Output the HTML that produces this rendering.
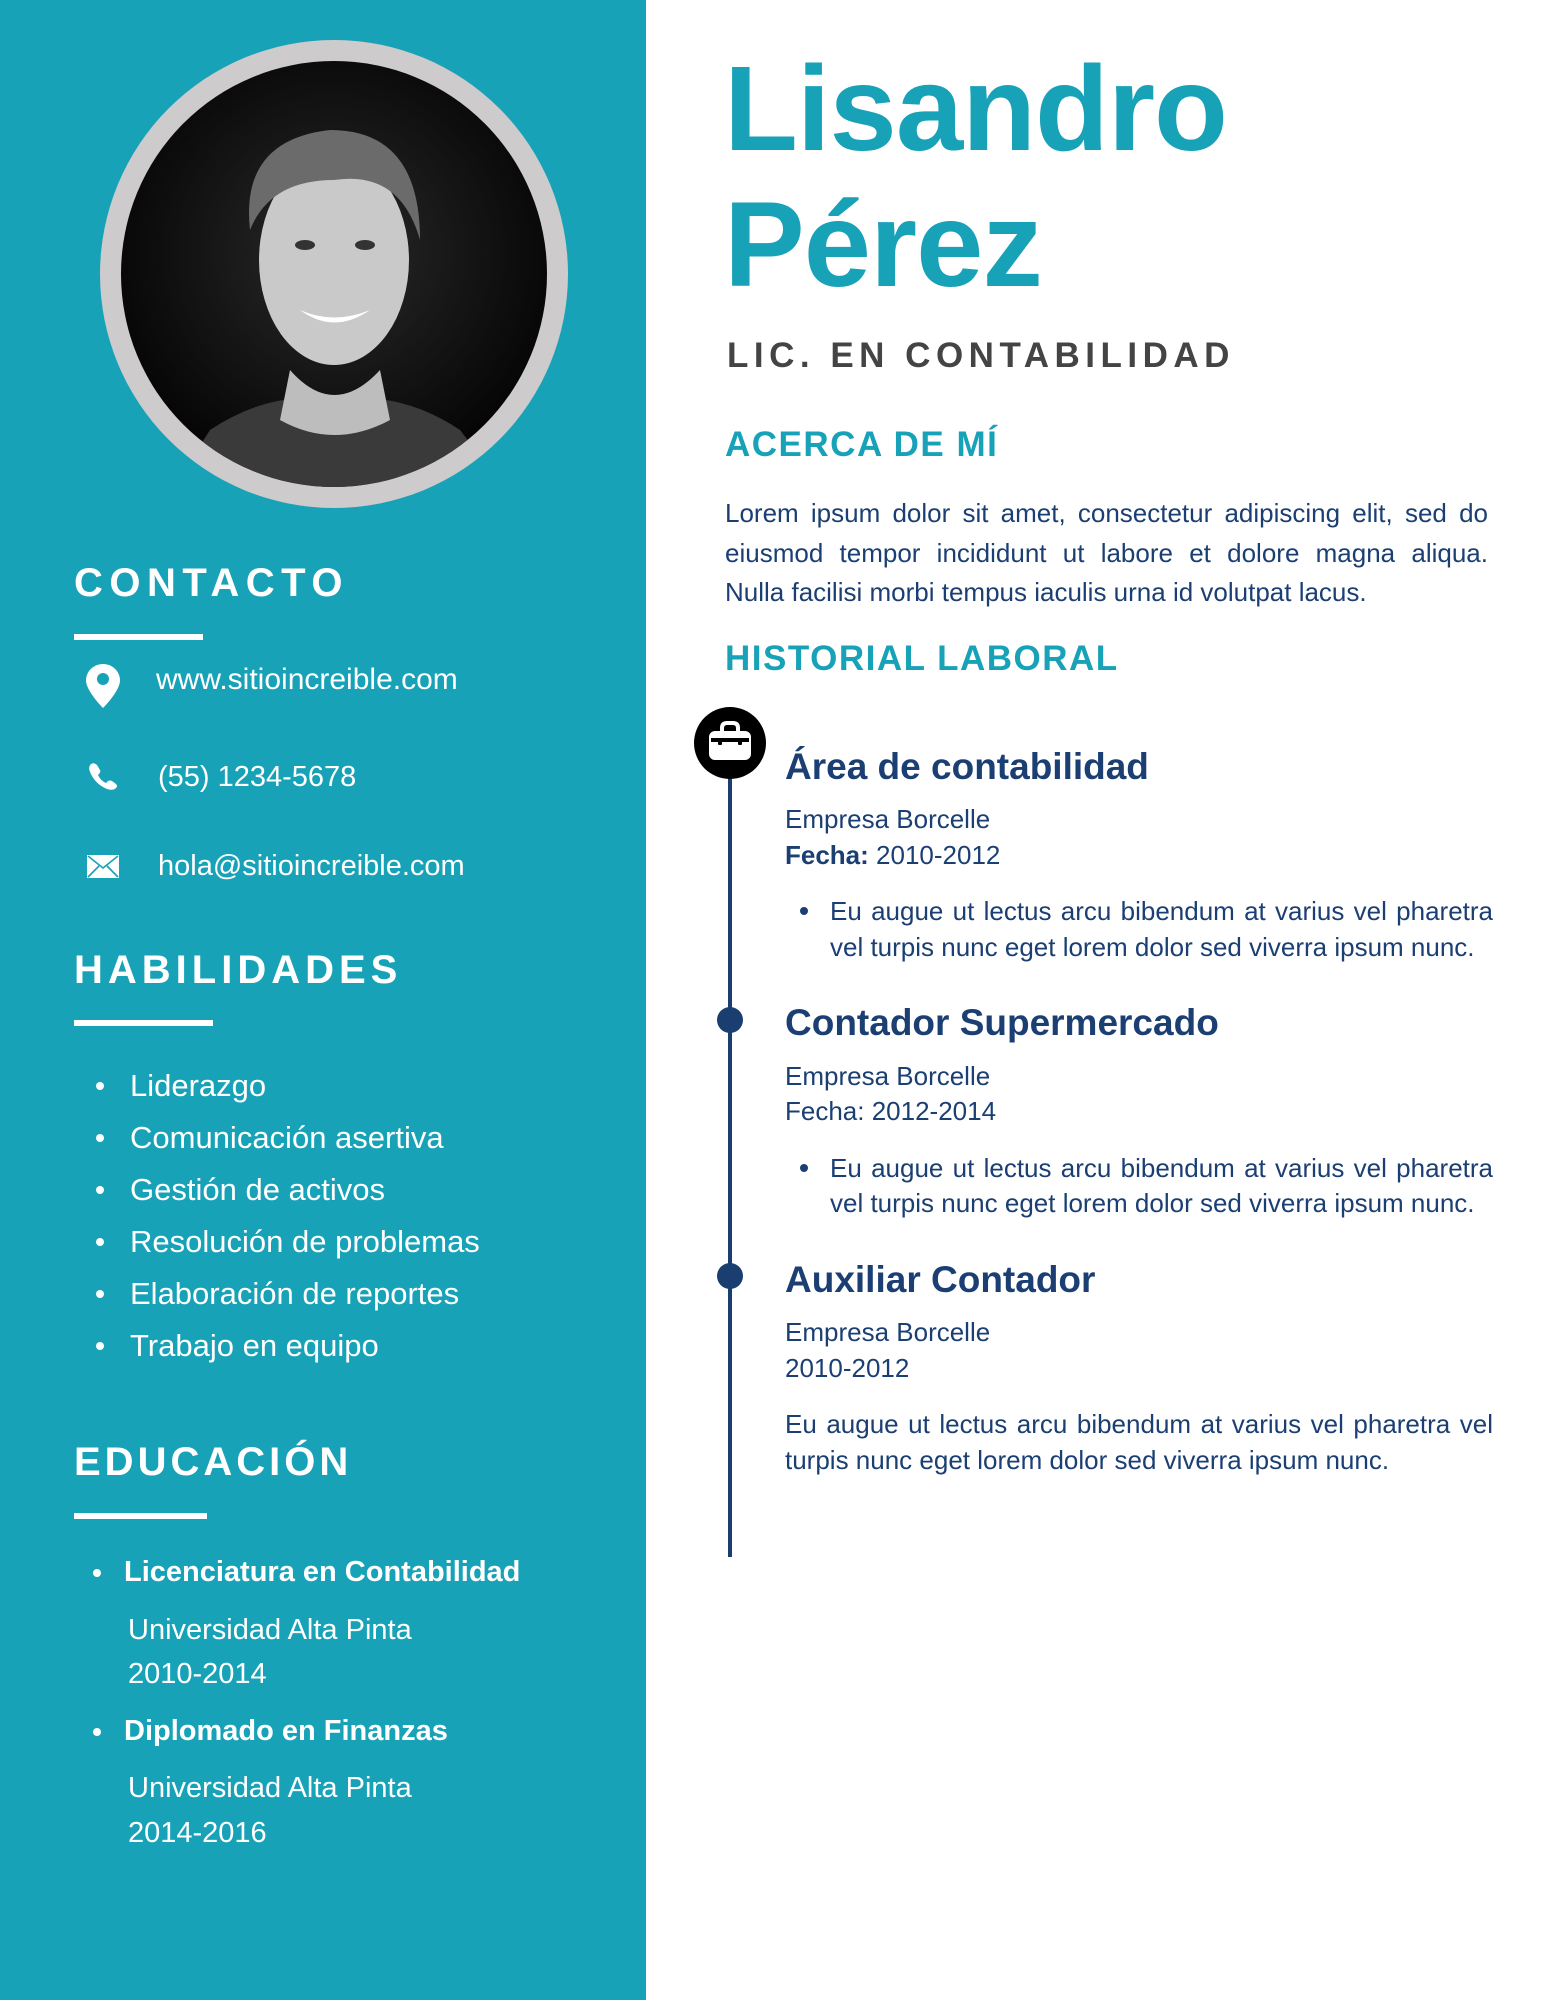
<!DOCTYPE html>
<html><head><meta charset="utf-8">
<style>
*{margin:0;padding:0;box-sizing:border-box}
html,body{width:1545px;height:2000px;overflow:hidden;background:#fff;font-family:"Liberation Sans",sans-serif}
.side{position:absolute;left:0;top:0;width:646px;height:2000px;background:#18a2b8;color:#fff}
.abs{position:absolute;white-space:nowrap}
.h{font-weight:bold;font-size:40px;letter-spacing:5px;line-height:1}
.bar{position:absolute;left:74px;height:6px;background:#fff}
.ct{font-size:29px;line-height:1}
.sk{font-size:31px;line-height:1}
.ed{font-size:29px;line-height:1}
.dot{position:absolute;width:8px;height:8px;border-radius:50%;background:#fff}
.name{font-weight:bold;font-size:121px;color:#18a2b8;letter-spacing:-1px;line-height:1}
.sec{font-weight:bold;font-size:35px;color:#18a2b8;letter-spacing:1.5px;line-height:1}
.t{font-weight:bold;font-size:37px;line-height:1;color:#1b3f73}
.b{font-size:26px;line-height:1;color:#1b3f73}
.j{position:absolute;text-align:justify;text-align-last:justify;white-space:nowrap;color:#1b3f73;font-size:26px;line-height:1}
</style></head><body>
<div class="side">
  <svg class="abs" style="left:100px;top:40px" width="468" height="468" viewBox="0 0 468 468">
    <defs>
      <radialGradient id="g" cx="50%" cy="45%" r="55%">
        <stop offset="0" stop-color="#2a2a2a"/><stop offset="1" stop-color="#050505"/>
      </radialGradient>
      <clipPath id="c"><circle cx="234" cy="234" r="213"/></clipPath>
    </defs>
    <circle cx="234" cy="234" r="234" fill="#cdcbcc"/>
    <circle cx="234" cy="234" r="213" fill="url(#g)"/>
    <g clip-path="url(#c)">
      <path d="M60 468 L110 390 Q170 350 234 360 Q300 350 360 390 L420 468Z" fill="#3a3a3a"/>
      <path d="M190 330 Q234 380 280 330 L290 380 Q234 410 180 380Z" fill="#bdbdbd"/>
      <ellipse cx="234" cy="220" rx="75" ry="105" fill="#c9c9c9"/>
      <path d="M150 190 Q140 100 230 90 Q320 90 320 200 Q300 130 234 140 Q170 140 150 190Z" fill="#6b6b6b"/>
      <path d="M200 270 Q234 295 270 270 Q234 285 200 270Z" fill="#fff"/>
      <ellipse cx="205" cy="205" rx="10" ry="5" fill="#333"/>
      <ellipse cx="265" cy="205" rx="10" ry="5" fill="#333"/>
    </g>
  </svg>

  <div class="abs h" style="left:74px;top:563px;letter-spacing:6.5px">CONTACTO</div>
  <div class="bar" style="top:634px;width:129px"></div>
  <svg class="abs" style="left:86px;top:664px" width="34" height="44" viewBox="0 0 34 44"><path d="M17 0C7.6 0 0 7.4 0 16.5 0 27 17 44 17 44S34 27 34 16.5C34 7.4 26.4 0 17 0Z" fill="#fff"/><circle cx="17" cy="15" r="6" fill="#18a2b8"/></svg>
  <div class="abs ct" style="left:156px;top:665px;font-size:30px">www.sitioincreible.com</div>
  <svg class="abs" style="left:88px;top:762px" width="30" height="28" viewBox="0 0 30 28"><path d="M3 2 Q6 0 9 3 L12 8 Q13 10 11 12 L10 13 Q13 19 18 21 L20 19 Q22 18 24 19 L28 22 Q30 24 28 26 Q25 29 19 27 Q7 22 2 10 Q0 5 3 2Z" fill="#fff"/></svg>
  <div class="abs ct" style="left:158px;top:763px">(55) 1234-5678</div>
  <svg class="abs" style="left:87px;top:855px" width="32" height="23" viewBox="0 0 32 23"><rect x="0" y="0" width="32" height="23" fill="#fff"/><path d="M1 1 L16 13 L31 1 M1 22 L12 11 M31 22 L20 11" stroke="#18a2b8" stroke-width="1.6" fill="none"/></svg>
  <div class="abs ct" style="left:158px;top:852px">hola@sitioincreible.com</div>

  <div class="abs h" style="left:74px;top:950px">HABILIDADES</div>
  <div class="bar" style="top:1020px;width:139px"></div>
  <div class="dot" style="left:96px;top:1082px"></div><div class="abs sk" style="left:130px;top:1070px">Liderazgo</div>
  <div class="dot" style="left:96px;top:1134px"></div><div class="abs sk" style="left:130px;top:1122px">Comunicación asertiva</div>
  <div class="dot" style="left:96px;top:1186px"></div><div class="abs sk" style="left:130px;top:1174px">Gestión de activos</div>
  <div class="dot" style="left:96px;top:1238px"></div><div class="abs sk" style="left:130px;top:1226px">Resolución de problemas</div>
  <div class="dot" style="left:96px;top:1290px"></div><div class="abs sk" style="left:130px;top:1278px">Elaboración de reportes</div>
  <div class="dot" style="left:96px;top:1342px"></div><div class="abs sk" style="left:130px;top:1330px">Trabajo en equipo</div>

  <div class="abs h" style="left:74px;top:1442px;letter-spacing:4px">EDUCACIÓN</div>
  <div class="bar" style="top:1513px;width:133px"></div>
  <div class="dot" style="left:93px;top:1569px"></div><div class="abs ed" style="left:124px;top:1558px;font-weight:bold">Licenciatura en Contabilidad</div>
  <div class="abs ed" style="left:128px;top:1616px">Universidad Alta Pinta</div>
  <div class="abs ed" style="left:128px;top:1660px">2010-2014</div>
  <div class="dot" style="left:93px;top:1728px"></div><div class="abs ed" style="left:124px;top:1717px;font-weight:bold">Diplomado en Finanzas</div>
  <div class="abs ed" style="left:128px;top:1774px">Universidad Alta Pinta</div>
  <div class="abs ed" style="left:128px;top:1819px">2014-2016</div>
</div>

<div class="abs name" style="left:724px;top:48px">Lisandro</div>
<div class="abs name" style="left:724px;top:184px">Pérez</div>
<div class="abs" style="left:727px;top:338px;font-weight:bold;font-size:35px;letter-spacing:5.5px;color:#444;line-height:1">LIC. EN CONTABILIDAD</div>
<div class="abs sec" style="left:725px;top:427px">ACERCA DE MÍ</div>
<div class="j" style="left:725px;top:500px;width:763px">Lorem ipsum dolor sit amet, consectetur adipiscing elit, sed do</div>
<div class="j" style="left:725px;top:540px;width:763px">eiusmod tempor incididunt ut labore et dolore magna aliqua.</div>
<div class="abs b" style="left:725px;top:579px">Nulla facilisi morbi tempus iaculis urna id volutpat lacus.</div>
<div class="abs sec" style="left:725px;top:641px">HISTORIAL LABORAL</div>

<div class="abs" style="left:728px;top:770px;width:4px;height:787px;background:#1a3e70"></div>
<svg class="abs" style="left:694px;top:707px" width="72" height="72" viewBox="0 0 72 72"><circle cx="36" cy="36" r="36" fill="#000"/><rect x="15" y="24" width="42" height="29" rx="6" fill="#fff"/><path d="M28 25 V21 Q28 16 33 16 H39 Q44 16 44 21 V25" stroke="#fff" stroke-width="4" fill="none"/><rect x="17" y="31" width="38" height="4" fill="#000"/><rect x="24" y="31" width="4" height="7" rx="1" fill="#000"/><rect x="44" y="31" width="4" height="7" rx="1" fill="#000"/></svg>
<div class="abs" style="left:717px;top:1007px;width:26px;height:26px;border-radius:50%;background:#1a3e70"></div>
<div class="abs" style="left:717px;top:1263px;width:26px;height:26px;border-radius:50%;background:#1a3e70"></div>

<div class="abs t" style="left:785px;top:748px">Área de contabilidad</div>
<div class="abs b" style="left:785px;top:806px">Empresa Borcelle</div>
<div class="abs b" style="left:785px;top:842px"><b>Fecha:</b> 2010-2012</div>
<div class="abs" style="left:800px;top:907px;width:8px;height:8px;border-radius:50%;background:#1b3f73"></div>
<div class="j" style="left:830px;top:898px;width:663px">Eu augue ut lectus arcu bibendum at varius vel pharetra</div>
<div class="abs b" style="left:830px;top:934px">vel turpis nunc eget lorem dolor sed viverra ipsum nunc.</div>

<div class="abs t" style="left:785px;top:1004px">Contador Supermercado</div>
<div class="abs b" style="left:785px;top:1063px">Empresa Borcelle</div>
<div class="abs b" style="left:785px;top:1098px">Fecha: 2012-2014</div>
<div class="abs" style="left:800px;top:1164px;width:8px;height:8px;border-radius:50%;background:#1b3f73"></div>
<div class="j" style="left:830px;top:1155px;width:663px">Eu augue ut lectus arcu bibendum at varius vel pharetra</div>
<div class="abs b" style="left:830px;top:1190px">vel turpis nunc eget lorem dolor sed viverra ipsum nunc.</div>

<div class="abs t" style="left:785px;top:1261px">Auxiliar Contador</div>
<div class="abs b" style="left:785px;top:1319px">Empresa Borcelle</div>
<div class="abs b" style="left:785px;top:1355px">2010-2012</div>
<div class="j" style="left:785px;top:1411px;width:708px">Eu augue ut lectus arcu bibendum at varius vel pharetra vel</div>
<div class="abs b" style="left:785px;top:1447px">turpis nunc eget lorem dolor sed viverra ipsum nunc.</div>
</body></html>
